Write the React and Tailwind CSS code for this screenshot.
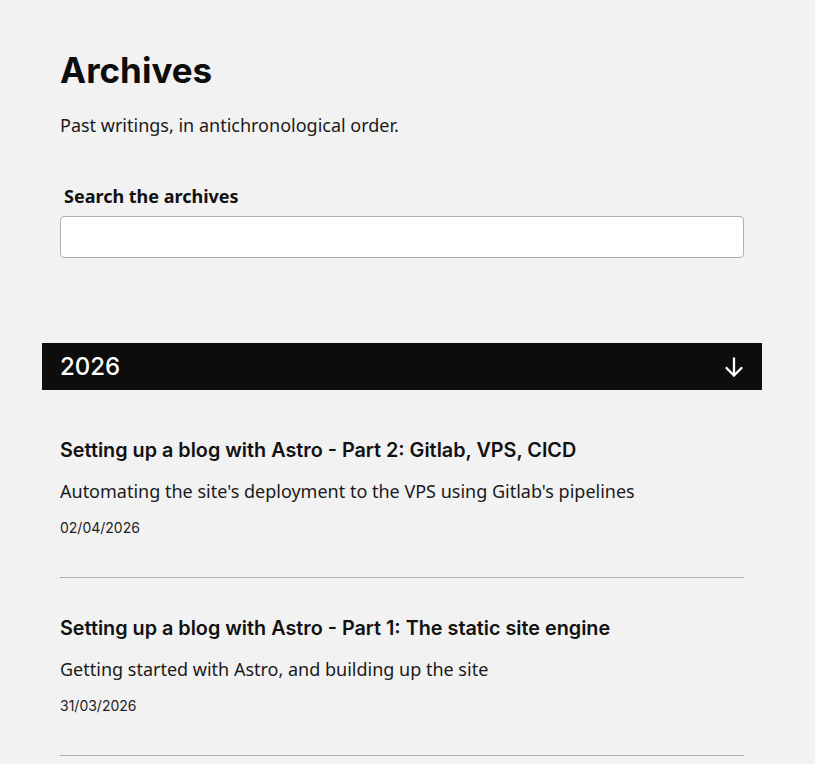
import React from "react";

const posts = [
  {
    title: "Setting up a blog with Astro - Part 2: Gitlab, VPS, CICD",
    desc: "Automating the site's deployment to the VPS using Gitlab's pipelines",
    date: "02/04/2026",
  },
  {
    title: "Setting up a blog with Astro - Part 1: The static site engine",
    desc: "Getting started with Astro, and building up the site",
    date: "31/03/2026",
  },
];

export default function App() {
  return (
    <div className="min-h-[764px] bg-[#f2f2f2] text-[#111] font-['Noto_Sans',sans-serif]">
      <div className="ml-[42px] w-[720px] pt-[50px]">
        <div className="px-[18px]">
          <h1 className="font-['Inter',sans-serif] text-[35px] leading-[40px] font-bold text-[#0d0d0d]">
            Archives
          </h1>
          <p className="mt-[23px] text-[18px] leading-[24px] text-[#1a1a1a]">
            Past writings, in antichronological order.
          </p>
          <label className="block mt-[47px] pl-[4px] text-[18px] leading-[24px] font-bold text-[#111]">
            Search the archives
          </label>
          <input
            type="text"
            className="mt-[8px] block w-full h-[42px] bg-white border border-[#b0b0b0] rounded-[4px] outline-none"
          />
        </div>

        <div className="mt-[85px] h-[47px] bg-[#0d0d0d] flex items-center justify-between px-[18px]">
          <span className="font-['Inter',sans-serif] text-[24px] font-medium text-white">2026</span>
          <svg width="24" height="24" viewBox="0 0 24 24" fill="none" stroke="white" strokeWidth="2.3" strokeLinecap="round" strokeLinejoin="round" className="-mr-[2px] mt-[1px]">
            <path d="M12 3.5v17" />
            <path d="M4.5 13l7.5 7.5 7.5-7.5" />
          </svg>
        </div>

        <div className="px-[18px] pt-[10px]">
          {posts.map((p) => (
            <div key={p.date} className="pt-[36px] pb-[39px] border-b border-[#b0b0b0]">
              <h2 className="font-['Inter',sans-serif] text-[19.8px] leading-[28px] font-semibold text-[#111]">
                {p.title}
              </h2>
              <p className="mt-[13px] text-[18px] leading-[28px] text-[#1a1a1a]">{p.desc}</p>
              <p className="mt-[13px] font-['Inter',sans-serif] text-[14px] leading-[20px] text-[#222]">
                {p.date}
              </p>
            </div>
          ))}
        </div>
      </div>
    </div>
  );
}
